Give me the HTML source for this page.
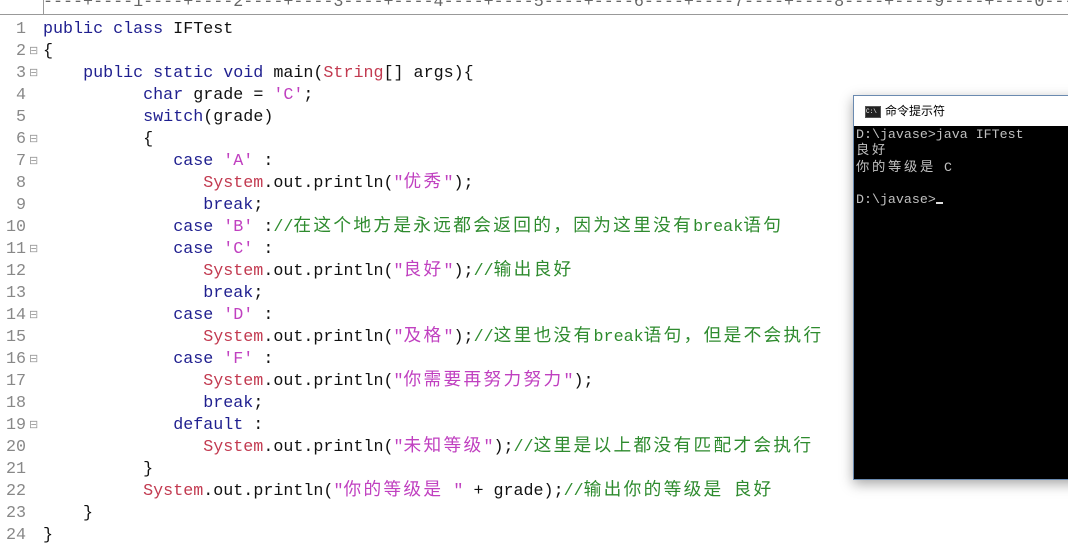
<!DOCTYPE html>
<html><head><meta charset="utf-8"><style>
body{margin:0;width:1068px;height:557px;background:#fff;position:relative;overflow:hidden;font-family:"Liberation Mono","Noto Sans CJK SC",monospace;}
.ruler{position:absolute;left:43px;top:-7px;font-size:16.7px;line-height:20px;color:#666;white-space:pre;}
.rl{position:absolute;left:0;top:14px;width:1068px;height:1px;background:#999;}
.rv{position:absolute;left:43px;top:0;width:1px;height:14px;background:#999;}
.wrap{position:absolute;left:0;top:2px;width:1068px;height:555px;}
.ln{position:absolute;left:0;width:26px;text-align:right;font-size:16.7px;line-height:22px;color:#888;}
.fd{position:absolute;left:29px;font-size:11px;line-height:12px;color:#999;}
.c{position:absolute;left:43px;font-size:16.7px;line-height:22px;height:22px;white-space:pre;color:#111;}
.k{color:#1f1f8f}.s{color:#c23a50}.m{color:#c040c0}.g{color:#2e8b2e}
.z{letter-spacing:2.3px;font-size:17.7px;font-family:"Noto Sans CJK SC",sans-serif;line-height:0;}
.win{position:absolute;left:853px;top:95px;width:230px;height:383px;background:#000;border:1px solid #6a8ab0;box-shadow:0 4px 12px rgba(0,0,0,.35);}
.tb{position:absolute;left:0;top:0;right:0;height:30px;background:#fff;}
.tt{position:absolute;left:31px;top:6px;font-size:12px;font-family:"Liberation Sans","Noto Sans CJK SC",sans-serif;color:#000;}
.ic{position:absolute;left:11px;top:10px;width:14px;height:10px;background:#222;border:1px solid #555;font-size:6px;color:#fff;line-height:10px;}
.con{position:absolute;left:2px;top:31px;font-size:13.3px;line-height:16.3px;color:#c0c0c0;white-space:pre;font-family:"Liberation Mono","Noto Sans CJK SC",monospace;}
.cz{letter-spacing:2.7px;font-family:"Noto Sans CJK SC",sans-serif;line-height:0;}
</style></head><body>
<div class="ruler">----+----1----+----2----+----3----+----4----+----5----+----6----+----7----+----8----+----9----+----0----</div>
<div class="rl"></div><div class="rv"></div>
<div class="wrap">
<div class="ln" style="top:17px">1</div>
<div class="ln" style="top:39px">2</div><div class="fd" style="top:44px">⊟</div>
<div class="ln" style="top:61px">3</div><div class="fd" style="top:66px">⊟</div>
<div class="ln" style="top:83px">4</div>
<div class="ln" style="top:105px">5</div>
<div class="ln" style="top:127px">6</div><div class="fd" style="top:132px">⊟</div>
<div class="ln" style="top:149px">7</div><div class="fd" style="top:154px">⊟</div>
<div class="ln" style="top:171px">8</div>
<div class="ln" style="top:193px">9</div>
<div class="ln" style="top:215px">10</div>
<div class="ln" style="top:237px">11</div><div class="fd" style="top:242px">⊟</div>
<div class="ln" style="top:259px">12</div>
<div class="ln" style="top:281px">13</div>
<div class="ln" style="top:303px">14</div><div class="fd" style="top:308px">⊟</div>
<div class="ln" style="top:325px">15</div>
<div class="ln" style="top:347px">16</div><div class="fd" style="top:352px">⊟</div>
<div class="ln" style="top:369px">17</div>
<div class="ln" style="top:391px">18</div>
<div class="ln" style="top:413px">19</div><div class="fd" style="top:418px">⊟</div>
<div class="ln" style="top:435px">20</div>
<div class="ln" style="top:457px">21</div>
<div class="ln" style="top:479px">22</div>
<div class="ln" style="top:501px">23</div>
<div class="ln" style="top:523px">24</div>

<div class="c" style="top:17px"><span class="k">public class</span> IFTest</div>
<div class="c" style="top:39px">{</div>
<div class="c" style="top:61px">    <span class="k">public static void</span> main(<span class="s">String</span>[] args){</div>
<div class="c" style="top:83px">          <span class="k">char</span> grade = <span class="m">'C'</span>;</div>
<div class="c" style="top:105px">          <span class="k">switch</span>(grade)</div>
<div class="c" style="top:127px">          {</div>
<div class="c" style="top:149px">             <span class="k">case</span> <span class="m">'A'</span> :</div>
<div class="c" style="top:171px">                <span class="s">System</span>.out.println(<span class="m">"<span class="z">优秀</span>"</span>);</div>
<div class="c" style="top:193px">                <span class="k">break</span>;</div>
<div class="c" style="top:215px">             <span class="k">case</span> <span class="m">'B'</span> :<span class="g">//<span class="z">在这个地方是永远都会返回的，因为这里没有</span>break<span class="z">语句</span></span></div>
<div class="c" style="top:237px">             <span class="k">case</span> <span class="m">'C'</span> :</div>
<div class="c" style="top:259px">                <span class="s">System</span>.out.println(<span class="m">"<span class="z">良好</span>"</span>);<span class="g">//<span class="z">输出良好</span></span></div>
<div class="c" style="top:281px">                <span class="k">break</span>;</div>
<div class="c" style="top:303px">             <span class="k">case</span> <span class="m">'D'</span> :</div>
<div class="c" style="top:325px">                <span class="s">System</span>.out.println(<span class="m">"<span class="z">及格</span>"</span>);<span class="g">//<span class="z">这里也没有</span>break<span class="z">语句，但是不会执行</span></span></div>
<div class="c" style="top:347px">             <span class="k">case</span> <span class="m">'F'</span> :</div>
<div class="c" style="top:369px">                <span class="s">System</span>.out.println(<span class="m">"<span class="z">你需要再努力努力</span>"</span>);</div>
<div class="c" style="top:391px">                <span class="k">break</span>;</div>
<div class="c" style="top:413px">             <span class="k">default</span> :</div>
<div class="c" style="top:435px">                <span class="s">System</span>.out.println(<span class="m">"<span class="z">未知等级</span>"</span>);<span class="g">//<span class="z">这里是以上都没有匹配才会执行</span></span></div>
<div class="c" style="top:457px">          }</div>
<div class="c" style="top:479px">          <span class="s">System</span>.out.println(<span class="m">"<span class="z">你的等级是</span> "</span> + grade);<span class="g">//<span class="z">输出你的等级是</span> <span class="z">良好</span></span></div>
<div class="c" style="top:501px">    }</div>
<div class="c" style="top:523px">}</div>
</div>

<div class="win"><div class="tb"><div class="ic">C:\</div><div class="tt">命令提示符</div></div>
<div class="con">D:\javase&gt;java IFTest
<span class="cz">良好</span>
<span class="cz">你的等级是</span> C

D:\javase&gt;<span style="display:inline-block;width:7px;height:2px;background:#ddd;vertical-align:-1px"></span></div></div>
</body></html>
